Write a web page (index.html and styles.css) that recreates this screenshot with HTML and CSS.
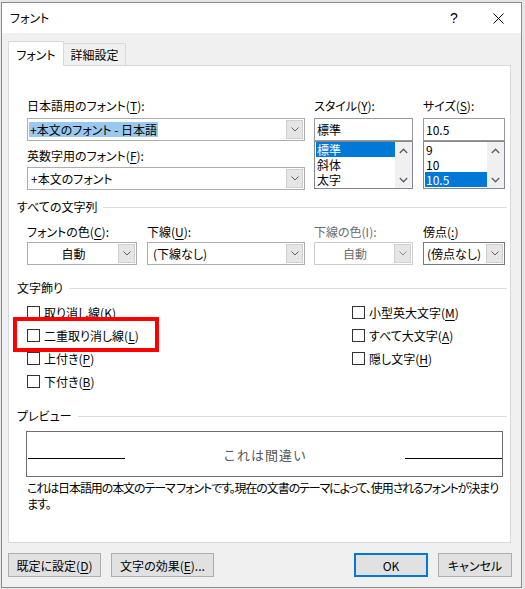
FILE: index.html
```html
<!DOCTYPE html>
<html lang="ja">
<head>
<meta charset="utf-8">
<title>フォント</title>
<link rel="stylesheet" href="styles.css">
</head>
<body>
<div class="dialog">
  <div class="titlebar">
    <span class="title">フォント</span>
    <span class="tb-btn help">?</span>
    <span class="tb-btn close"><svg width="11" height="11" viewBox="0 0 11 11"><path d="M0.5 0.5L10.5 10.5M10.5 0.5L0.5 10.5" stroke="#000" stroke-width="1" fill="none"/></svg></span>
  </div>
  <div class="client">
    <div class="tabs">
      <div class="tab active">フォント</div>
      <div class="tab">詳細設定</div>
    </div>
    <div class="panel">
      <div class="fonts">
        <div class="col-font">
          <div class="lbl">日本語用のフォント(<u>T</u>):</div>
          <div class="combo"><span class="val"><span class="sel-light">+本文のフォント - 日本語</span></span><span class="dd"><svg width="8" height="5" viewBox="0 0 8 5"><path d="M0.5 0.5L4 4L7.5 0.5" fill="none" stroke="#606060"/></svg></span></div>
          <div class="lbl lbl-2">英数字用のフォント(<u>F</u>):</div>
          <div class="combo combo-2"><span class="val pad">+本文のフォント</span><span class="dd"><svg width="8" height="5" viewBox="0 0 8 5"><path d="M0.5 0.5L4 4L7.5 0.5" fill="none" stroke="#606060"/></svg></span></div>
        </div>
        <div class="col-style">
          <div class="lbl">スタイル(<u>Y</u>):</div>
          <div class="edit">標準</div>
          <div class="list">
            <div class="items">
              <div class="item selected">標準</div>
              <div class="item">斜体</div>
              <div class="item">太字</div>
            </div>
            <div class="vscroll">
              <span class="sb"><svg width="9" height="6" viewBox="0 0 9 6"><path d="M0.8 5L4.5 1.3L8.2 5" fill="none" stroke="#606060" stroke-width="1.4"/></svg></span>
              <span class="sb"><svg width="9" height="6" viewBox="0 0 9 6"><path d="M0.8 1L4.5 4.7L8.2 1" fill="none" stroke="#606060" stroke-width="1.4"/></svg></span>
            </div>
          </div>
        </div>
        <div class="col-size">
          <div class="lbl">サイズ(<u>S</u>):</div>
          <div class="edit">10.5</div>
          <div class="list">
            <div class="items">
              <div class="item">9</div>
              <div class="item">10</div>
              <div class="item selected">10.5</div>
            </div>
            <div class="vscroll">
              <span class="sb"><svg width="9" height="6" viewBox="0 0 9 6"><path d="M0.8 5L4.5 1.3L8.2 5" fill="none" stroke="#606060" stroke-width="1.4"/></svg></span>
              <span class="sb"><svg width="9" height="6" viewBox="0 0 9 6"><path d="M0.8 1L4.5 4.7L8.2 1" fill="none" stroke="#606060" stroke-width="1.4"/></svg></span>
            </div>
          </div>
        </div>
      </div>

      <div class="group-hdr hdr-all"><span>すべての文字列</span><span class="line"></span></div>
      <div class="attrs">
        <div class="a-color">
          <div class="lbl">フォントの色(<u>C</u>):</div>
          <div class="combo combo-a"><span class="val center">自動</span><span class="dd"><svg width="8" height="5" viewBox="0 0 8 5"><path d="M0.5 0.5L4 4L7.5 0.5" fill="none" stroke="#606060"/></svg></span></div>
        </div>
        <div class="a-under">
          <div class="lbl">下線(<u>U</u>):</div>
          <div class="combo combo-a"><span class="val pad5">(下線なし)</span><span class="dd"><svg width="8" height="5" viewBox="0 0 8 5"><path d="M0.5 0.5L4 4L7.5 0.5" fill="none" stroke="#606060"/></svg></span></div>
        </div>
        <div class="a-ucolor">
          <div class="lbl disabled">下線の色(I):</div>
          <div class="combo combo-a combo-dis"><span class="val center">自動</span><span class="dd"><svg width="8" height="5" viewBox="0 0 8 5"><path d="M0.5 0.5L4 4L7.5 0.5" fill="none" stroke="#8a8a8a"/></svg></span></div>
        </div>
        <div class="a-emph">
          <div class="lbl">傍点(<u>:</u>)</div>
          <div class="combo combo-a combo-dark"><span class="val pad">(傍点なし)</span><span class="dd"><svg width="8" height="5" viewBox="0 0 8 5"><path d="M0.5 0.5L4 4L7.5 0.5" fill="none" stroke="#606060"/></svg></span></div>
        </div>
      </div>

      <div class="group-hdr hdr-deco"><span>文字飾り</span><span class="line"></span></div>
      <div class="deco">
        <div class="deco-col deco-left">
          <div class="check"><span class="box"></span>取り消し線(<u>K</u>)</div>
          <div class="check"><span class="box"></span>二重取り消し線(<u>L</u>)</div>
          <div class="check"><span class="box"></span>上付き(<u>P</u>)</div>
          <div class="check"><span class="box"></span>下付き(<u>B</u>)</div>
        </div>
        <div class="deco-col">
          <div class="check"><span class="box"></span>小型英大文字(<u>M</u>)</div>
          <div class="check"><span class="box"></span>すべて大文字(<u>A</u>)</div>
          <div class="check"><span class="box"></span>隠し文字(<u>H</u>)</div>
        </div>
      </div>

      <div class="group-hdr hdr-pv"><span>プレビュー</span><span class="line"></span></div>
      <div class="preview">
        <span class="pv-line pv-l"></span>
        <span class="pv-text">これは間違い</span>
        <span class="pv-line pv-r"></span>
      </div>
      <div class="desc">これは日本語用の本文のテーマ フォントです。現在の文書のテーマによって、使用されるフォントが決まり<br>ます。</div>

      <div class="highlight"></div>
    </div>
    <div class="buttons">
      <div class="btn btn-default">既定に設定(<u>D</u>)</div>
      <div class="btn btn-effect">文字の効果(<u>E</u>)...</div>
      <div class="btn btn-ok">OK</div>
      <div class="btn btn-cancel">キャンセル</div>
    </div>
  </div>
</div>
</body>
</html>
```

FILE: styles.css
```css
html, body {
  margin: 0;
  padding: 0;
}
body {
  background: #e6e6e6;
  font-family: "Noto Sans CJK JP", "Noto Sans", sans-serif;
  font-size: 12px;
  color: #000;
  font-feature-settings: "palt";
  width: 525px;
  height: 589px;
  overflow: hidden;
}
u {
  text-decoration: underline;
  text-underline-offset: 2px;
}

.dialog {
  box-sizing: border-box;
  width: 521px;
  height: 586px;
  margin: 2px 0 0 1px;
  border: 1px solid #8c8c8c;
  background: #f0f0f0;
  display: flex;
  flex-direction: column;
}

.titlebar {
  flex: none;
  height: 30px;
  background: #fff;
  display: flex;
  align-items: center;
}
.title {
  flex: 1;
  padding-left: 8px;
  line-height: 16px;
}
.tb-btn {
  height: 30px;
  display: flex;
  align-items: center;
  justify-content: center;
}
.help {
  width: 44px;
  font-family: "Liberation Sans", sans-serif;
  font-size: 14px;
}
.close {
  width: 45px;
}

.client {
  flex: 1;
  padding: 8px 0 0 6px;
}

.tabs {
  display: flex;
  align-items: flex-end;
  height: 24px;
}
.tab {
  box-sizing: border-box;
  width: 62px;
  height: 22px;
  border: 1px solid #d9d9d9;
  border-left: none;
  border-bottom: none;
  background: #f0f0f0;
  display: flex;
  align-items: center;
  justify-content: center;
}
.tab.active {
  width: 56px;
  height: 25px;
  margin-bottom: -1px;
  border-left: 1px solid #d9d9d9;
  background: #fff;
  position: relative;
  z-index: 1;
}

.panel {
  box-sizing: border-box;
  width: 503px;
  height: 478px;
  border: 1px solid #d9d9d9;
  background: #fff;
  position: relative;
  padding: 32px 3px 0 8px;
}

.lbl {
  height: 16px;
  line-height: 16px;
  white-space: nowrap;
}
.lbl.disabled {
  color: #6d6d6d;
}

/* top section */
.fonts {
  display: flex;
  margin-left: 10px;
}
.col-font { width: 278px; }
.col-style { width: 99px; margin-left: 9px; }
.col-size { width: 82px; margin-left: 10px; }

.combo {
  box-sizing: border-box;
  height: 23px;
  margin-top: 4px;
  border: 1px solid #adadad;
  background: #fff;
  display: flex;
}
.lbl-2 { margin-top: 7px; }
.combo-2 { margin-top: 3px; }
.combo .val {
  flex: 1;
  display: flex;
  align-items: center;
  white-space: nowrap;
  overflow: hidden;
  padding-left: 1px;
}
.combo .val.pad { padding-left: 3px; }
.combo .val.pad5 { padding-left: 5px; }
.combo .val.center { justify-content: center; }
.sel-light {
  background: #99c9ef;
  line-height: 15px;
  padding: 0 1px;
}
.dd {
  flex: none;
  box-sizing: border-box;
  width: 17px;
  margin: 1px 1px 1px 0;
  border: 1px solid #cfcfcf;
  background: #e5e5e5;
  display: flex;
  align-items: center;
  justify-content: center;
}

.edit {
  box-sizing: border-box;
  height: 23px;
  margin-top: 4px;
  border: 1px solid #9a9a9a;
  padding-left: 2px;
  display: flex;
  align-items: center;
}
.list {
  box-sizing: border-box;
  height: 48px;
  border: 1px solid #828790;
  display: flex;
}
.items {
  flex: 1;
  padding-left: 1px;
}
.item {
  height: 15px;
  line-height: 15px;
  padding-left: 1px;
  overflow: hidden;
}
.item.selected {
  background: #0078d7;
  color: #fff;
}
.vscroll {
  width: 17px;
  background: #f0f0f0;
  display: flex;
  flex-direction: column;
  justify-content: space-between;
}
.sb {
  height: 17px;
  display: flex;
  align-items: center;
  justify-content: center;
}

/* group headers */
.group-hdr {
  display: flex;
  align-items: center;
  height: 16px;
  line-height: 16px;
  white-space: nowrap;
}
.group-hdr .line {
  flex: 1;
  height: 1px;
  background: #dcdcdc;
  margin-left: 6px;
}
.hdr-all { margin-top: 9px; }
.hdr-deco { margin-top: 15px; }
.hdr-pv { margin-top: 15px; }

/* attributes row */
.attrs {
  display: flex;
  margin-left: 10px;
  margin-top: 9px;
}
.attrs .combo { margin-top: 2px; }
.a-color { width: 110px; }
.a-under { width: 158px; margin-left: 10px; }
.a-ucolor { width: 99px; margin-left: 9px; }
.a-emph { width: 82px; margin-left: 10px; }
.combo-dis { border-color: #cccccc; }
.combo-dis .val { color: #6d6d6d; }
.combo-dark { border-color: #7a7a7a; }

/* decorations */
.deco {
  display: flex;
  margin-left: 10px;
  margin-top: 5px;
}
.deco-left { width: 325px; }
.check {
  height: 23px;
  display: flex;
  align-items: center;
  white-space: nowrap;
}
.box {
  box-sizing: border-box;
  width: 13px;
  height: 13px;
  border: 1px solid #333;
  background: #fff;
  margin-right: 4px;
  flex: none;
}

/* preview */
.preview {
  box-sizing: border-box;
  width: 477px;
  height: 46px;
  margin: 7px 0 0 9px;
  border: 1px solid #6d6d6d;
  display: flex;
  align-items: center;
}
.pv-line {
  flex: none;
  width: 97px;
  height: 1px;
  background: #000;
  margin-top: 8px;
}
.pv-l { margin-left: 1px; }
.pv-text {
  flex: 1;
  text-align: center;
  font-size: 13px;
  color: #595959;
  letter-spacing: 1px;
  font-feature-settings: normal;
}
.desc {
  margin: 3px 0 0 10px;
  line-height: 16px;
  white-space: nowrap;
  letter-spacing: -1.1px;
}

.highlight {
  position: absolute;
  left: 4px;
  top: 251px;
  width: 146px;
  height: 35px;
  box-sizing: border-box;
  border: 4px solid #ff0000;
}

/* buttons */
.buttons {
  display: flex;
  width: 504px;
  margin-top: 10px;
}
.btn {
  box-sizing: border-box;
  height: 24px;
  border: 1px solid #adadad;
  background: #e1e1e1;
  display: flex;
  align-items: center;
  justify-content: center;
  white-space: nowrap;
}
.btn-default { width: 93px; }
.btn-effect { width: 103px; margin-left: 10px; }
.btn-ok {
  width: 74px;
  margin-left: auto;
  border: 2px solid #0078d7;
}
.btn-cancel { width: 74px; margin-left: 10px; }
```
